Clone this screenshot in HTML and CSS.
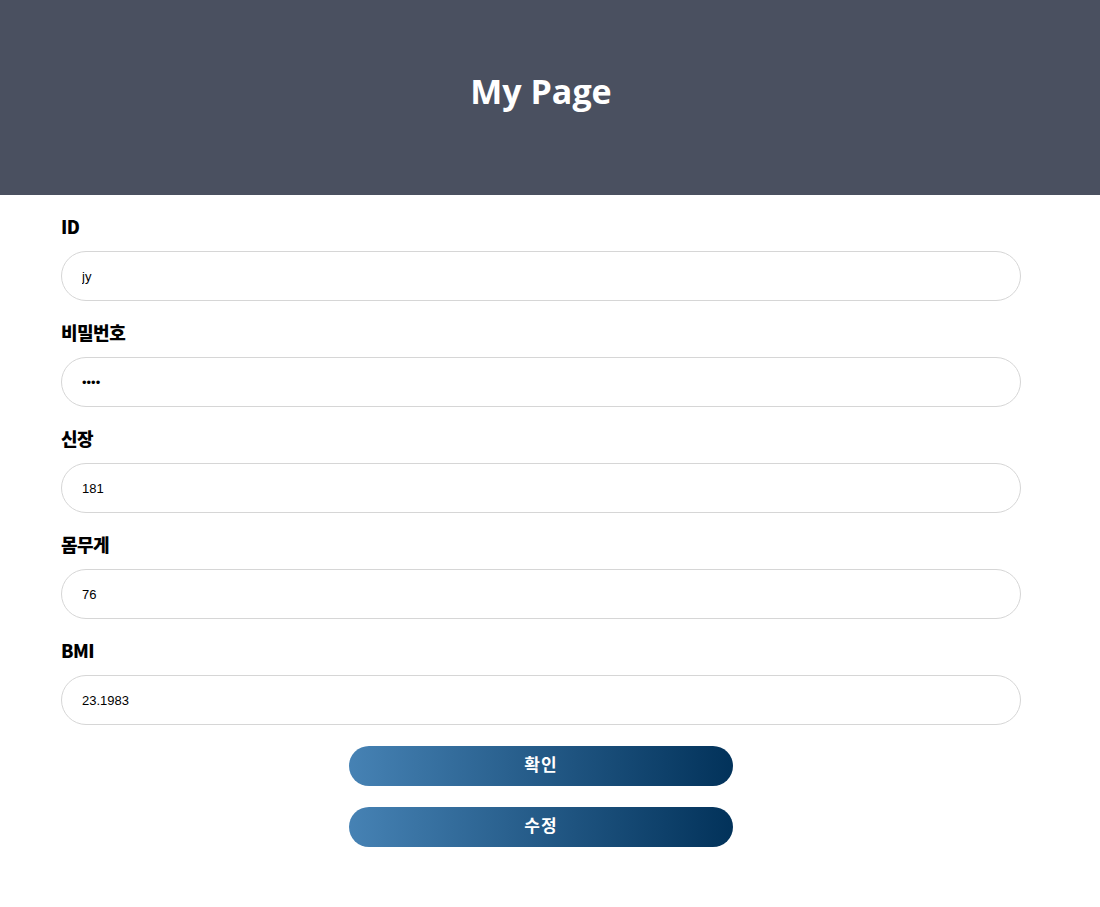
FILE: index.html
```html
<!DOCTYPE html>
<html lang="ko">

<head>
    <meta charset="UTF-8">
    <meta name="viewport" content="width=device-width, initial-scale=1.0">
    <title>My Page</title>
    <link rel="stylesheet" href="styles.css">
</head>

<body>
    <header class="header">
        <h1 class="page-title">My Page</h1>
    </header>

    <form class="mypage-form">
        <div class="field">
            <label for="user-id">ID</label>
            <input type="text" id="user-id" value="jy">
        </div>
        <div class="field">
            <label for="user-pw">비밀번호</label>
            <input type="password" id="user-pw" value="1234">
        </div>
        <div class="field">
            <label for="user-height">신장</label>
            <input type="text" id="user-height" value="181">
        </div>
        <div class="field">
            <label for="user-weight">몸무게</label>
            <input type="text" id="user-weight" value="76">
        </div>
        <div class="field">
            <label for="user-bmi">BMI</label>
            <input type="text" id="user-bmi" value="23.1983">
        </div>

        <div class="btn-group">
            <button type="submit" class="btn">확인</button>
            <button type="button" class="btn">수정</button>
        </div>
    </form>
</body>

</html>
```

FILE: styles.css
```css
:root {
    --header-bg: #4a5060;
    --border-color: #d6d6d6;
    --grad-start: #4682b4;
    /* steel blue */
    --grad-end: #02325a;
    /* dark navy */
}

* {
    box-sizing: border-box;
    margin: 0;
    padding: 0;
}

body {
    background-color: #fff;
    font-family: "Noto Sans CJK KR", "Noto Sans", sans-serif;
}

.header {
    background-color: var(--header-bg);
    height: 195px;
    padding-top: 66px;
}

.page-title {
    width: 960px;
    margin-left: 61px;
    text-align: center;
    color: #fff;
    font-family: "Open Sans", sans-serif;
    font-size: 34px;
    font-weight: 700;
    line-height: 50px;
}

.mypage-form {
    width: 960px;
    margin-left: 61px;
    padding-top: 20px;
}

.field {
    margin-bottom: 20px;
}

.field label {
    display: block;
    font-size: 18px;
    font-weight: 900;
    line-height: 22px;
    letter-spacing: -0.5px;
    color: #000;
    margin-bottom: 14px;
}

.field input {
    display: block;
    width: 100%;
    height: 50px;
    padding: 0 20px;
    border: 1px solid var(--border-color);
    border-radius: 25px;
    font-family: "Liberation Sans", Arial, sans-serif;
    font-size: 13px;
    color: #000;
    outline: none;
}

.btn-group {
    display: flex;
    flex-direction: column;
    align-items: center;
    gap: 21px;
    margin-top: 21px;
}

.btn {
    width: 384px;
    height: 40px;
    padding-bottom: 6px;
    border: none;
    border-radius: 20px;
    background: linear-gradient(to right, var(--grad-start), var(--grad-end));
    color: #fff;
    font-family: "Noto Sans CJK KR", sans-serif;
    font-size: 17px;
    font-weight: 700;
    letter-spacing: 1px;
    cursor: pointer;
}
```
